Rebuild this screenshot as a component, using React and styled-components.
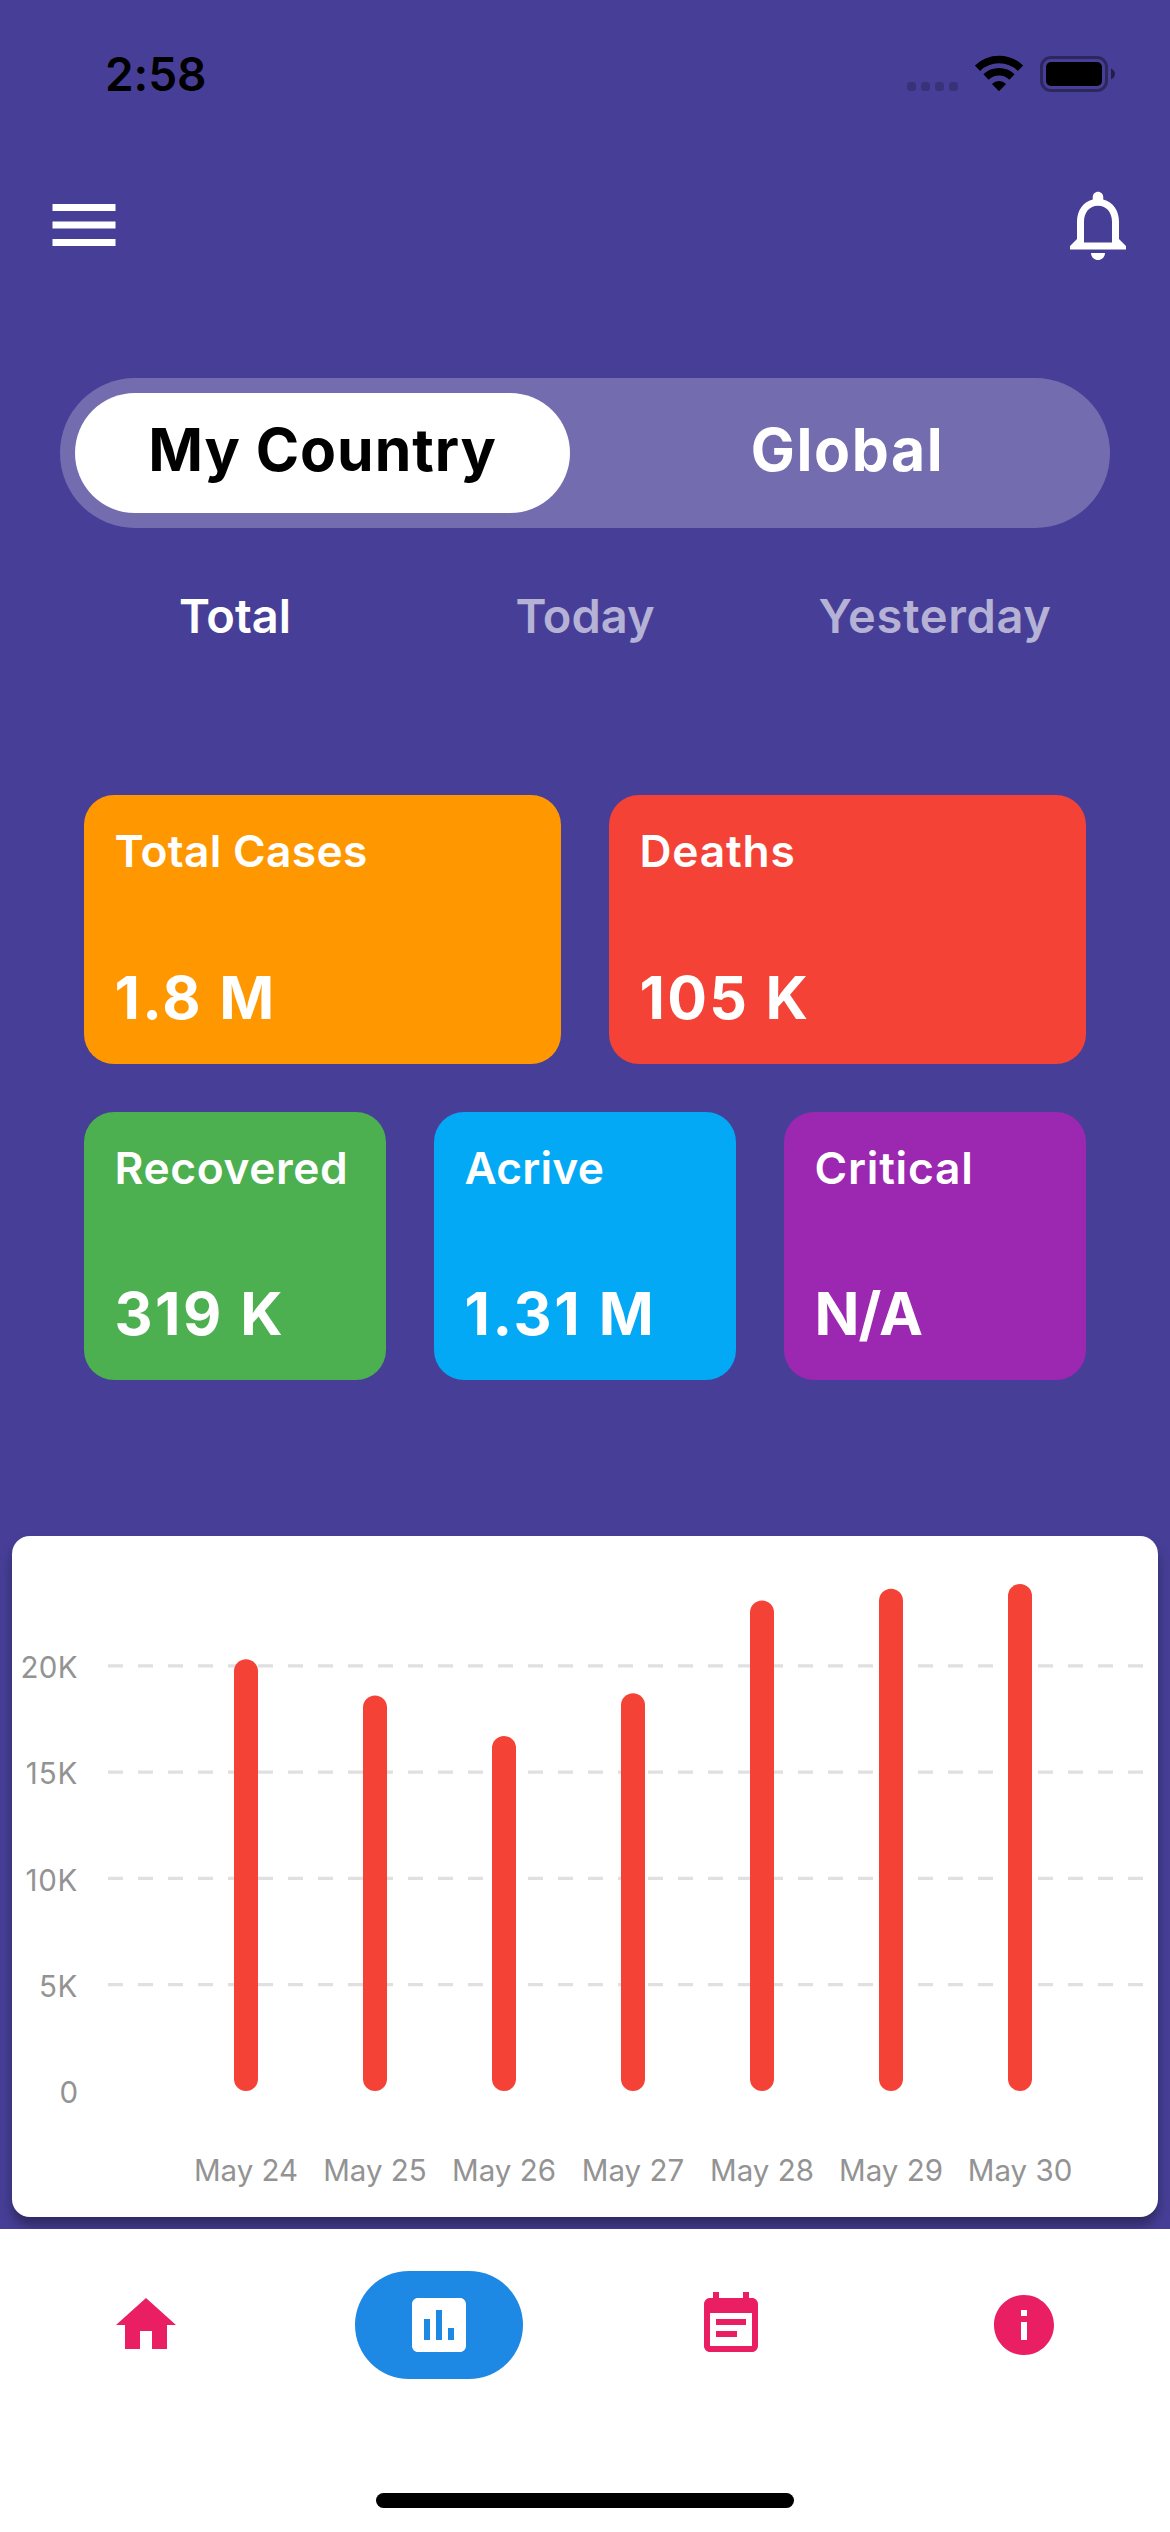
import React from 'react';
import styled, { createGlobalStyle } from 'styled-components';

const GlobalStyle = createGlobalStyle`
  * { box-sizing: border-box; }
  html, body { margin: 0; padding: 0; background: #473f97; }
  body { font-family: Inter, 'Liberation Sans', sans-serif; }
  button { border: 0; padding: 0; margin: 0; background: none; font: inherit; color: inherit; }
  svg { display: block; }
`;

const Screen = styled.div`
  display: flex;
  flex-direction: column;
  width: 1170px;
  height: 2532px;
  background: #473f97;
  overflow: hidden;
`;

const StatusBar = styled.header`
  display: flex;
  justify-content: space-between;
  height: 141px;
  padding: 0 54px 0 105px;
`;

const Clock = styled.time`
  font-size: 46px;
  font-weight: 600;
  line-height: 60px;
  letter-spacing: -0.1px;
  margin-top: 44px;
  color: #000;
`;

const AppBar = styled.nav`
  display: flex;
  align-items: center;
  justify-content: space-between;
  height: 168px;
  padding: 0 30px 0 42px;
  color: #fff;
`;

const IconButton = styled.button`
  display: flex;
`;

const Segmented = styled.div`
  display: grid;
  grid-template-columns: 1fr 1fr;
  gap: 30px;
  height: 150px;
  margin: 69px 60px 0;
  padding: 15px;
  border-radius: 75px;
  background: #736db0;
`;

const Segment = styled.button`
  height: 120px;
  padding-bottom: 8px;
  border-radius: 60px;
  background: ${(p) => (p.$active ? '#fff' : 'transparent')};
  color: ${(p) => (p.$active ? '#000' : '#fff')};
  font-size: 58.8px;
  font-weight: 700;
  letter-spacing: ${(p) => p.$spacing}px;
`;

const Tabs = styled.div`
  display: grid;
  grid-template-columns: repeat(3, 350px);
  margin: 58px 60px 0;
`;

const Tab = styled.button`
  height: 60px;
  line-height: 60px;
  font-size: 47px;
  font-weight: 600;
  letter-spacing: ${(p) => p.$spacing}px;
  color: ${(p) => (p.$active ? '#fff' : '#b5b2d5')};
`;

const Stats = styled.section`
  display: flex;
  flex-direction: column;
  gap: 48px;
  height: 585px;
  margin: 149px 84px 0;
`;

const StatsRow = styled.div`
  display: flex;
  flex: 1;
  gap: 48px;
`;

const Stat = styled.article`
  display: flex;
  flex-direction: column;
  justify-content: space-between;
  flex: 1 1 0;
  min-width: 0;
  padding: 26px 0 31px 30.5px;
  border-radius: 30px;
  background: ${(p) => p.$color};
  color: #fff;
  white-space: nowrap;
`;

const StatLabel = styled.span`
  font-size: 44.3px;
  font-weight: 600;
  line-height: 60px;
  letter-spacing: ${(p) => p.$spacing}px;
`;

const StatValue = styled.span`
  font-size: 59px;
  font-weight: 700;
  line-height: 70px;
  letter-spacing: ${(p) => p.$spacing}px;
`;

const ChartCard = styled.section`
  height: 681px;
  margin: 156px 12px 12px;
  border-radius: 18px;
  background: #fff;
  box-shadow: 0 9px 12px rgba(0, 0, 0, 0.34);
`;

const AxisText = styled.text`
  font-size: 29.5px;
  fill: #939393;
  text-anchor: ${(p) => p.$anchor};
  letter-spacing: ${(p) => p.$spacing || 0}px;
`;

const BottomNav = styled.nav`
  display: flex;
  flex-direction: column;
  align-items: center;
  position: relative;
  height: 303px;
  padding-top: 42px;
  background: #fff;
`;

const NavItems = styled.div`
  display: grid;
  grid-template-columns: repeat(4, 1fr);
  justify-items: center;
  width: 100%;
`;

const NavItem = styled.button`
  display: flex;
  padding: 18px 48px;
  border-radius: 54px;
  background: ${(p) => (p.$active ? '#1e88e5' : 'transparent')};
  color: ${(p) => (p.$active ? '#fff' : '#e91e63')};
`;

const HomeIndicator = styled.div`
  width: 418px;
  height: 15px;
  margin-top: 114px;
  border-radius: 8px;
  background: #000;
`;

const ICONS = {
  menu: 'M3 18h18v-2H3v2zm0-5h18v-2H3v2zm0-7v2h18V6H3z',
  bell: 'M12 22c1.1 0 2-.9 2-2h-4c0 1.1.9 2 2 2zm6-6v-5c0-3.07-1.63-5.64-4.5-6.32V4c0-.83-.67-1.5-1.5-1.5s-1.5.67-1.5 1.5v.68C7.64 5.36 6 7.92 6 11v5l-2 2v1h16v-1l-2-2zm-2 1H8v-6c0-2.48 1.51-4.5 4-4.5s4 2.02 4 4.5v6z',
  home: 'M10 20v-6h4v6h5v-8h3L12 3 2 12h3v8z',
  chart: 'M19 3H5c-1.1 0-2 .9-2 2v14c0 1.1.9 2 2 2h14c1.1 0 2-.9 2-2V5c0-1.1-.9-2-2-2zM9 17H7v-7h2v7zm4 0h-2V7h2v10zm4 0h-2v-4h2v4z',
  events: 'M17 10H7v2h10v-2zm2-7h-1V1h-2v2H8V1H6v2H5c-1.11 0-1.99.9-1.99 2L3 19c0 1.1.89 2 2 2h14c1.1 0 2-.9 2-2V5c0-1.1-.9-2-2-2zm0 16H5V8h14v11zm-5-5H7v2h7v-2z',
  info: 'M12 2C6.48 2 2 6.48 2 12s4.48 10 10 10 10-4.48 10-10S17.52 2 12 2zm1 15h-2v-6h2v6zm0-8h-2V7h2v2z',
};

function Icon({ name, size }) {
  return (
    <svg width={size} height={size} viewBox="0 0 24 24" fill="currentColor" aria-hidden="true">
      <path d={ICONS[name]} />
    </svg>
  );
}

function StatusIcons() {
  return (
    <svg width="209" height="141" viewBox="907 0 209 141" aria-hidden="true">
      {[907, 921, 935, 949].map((x) => (
        <rect key={x} x={x} y="82" width="9" height="9" rx="3" fill="#000" fillOpacity="0.2" />
      ))}
      <path d="M977.5 68.2A31 31 0 0 1 1020.5 68.2" fill="none" stroke="#000" strokeWidth="7.6" />
      <path d="M986 77A18.6 18.6 0 0 1 1012 77" fill="none" stroke="#000" strokeWidth="7.4" />
      <path d="M999 91.2L991.9 84A10 10 0 0 1 1006.1 84Z" fill="#000" />
      <rect x="1041.5" y="57.5" width="65" height="33" rx="9.5" fill="none" stroke="#000" strokeOpacity="0.38" strokeWidth="3" />
      <rect x="1046" y="62" width="56" height="24" rx="5" fill="#000" />
      <path d="M1111 68.5c2.4 1 4 3 4 5.5s-1.600 4.500-4 5.500z" fill="#000" fillOpacity="0.5" />
    </svg>
  );
}

const DAYS = [
  { label: 'May 24', cases: 20.31 },
  { label: 'May 25', cases: 18.6 },
  { label: 'May 26', cases: 16.7 },
  { label: 'May 27', cases: 18.71 },
  { label: 'May 28', cases: 23.07 },
  { label: 'May 29', cases: 23.62 },
  { label: 'May 30', cases: 23.85 },
];
const TICKS = [
  { label: '20K', value: 20, spacing: 0.35 },
  { label: '15K', value: 15, spacing: 0.8 },
  { label: '10K', value: 10, spacing: 0.7 },
  { label: '5K', value: 5, spacing: 0.6 },
  { label: '0', value: 0 },
];
const BASE = 555;
const UNIT = 21.26;

function Chart() {
  return (
    <svg width="1146" height="681" viewBox="0 0 1146 681">
      {TICKS.map(({ label, value, spacing }) => {
        const y = BASE - value * UNIT;
        return (
          <g key={label}>
            <AxisText $anchor="end" $spacing={spacing} x="66" y={y + 12.2}>{label}</AxisText>
            {value > 0 && (
              <line x1="96" x2="1134" y1={y} y2={y} stroke="#e0e0e0" strokeWidth="3.2" strokeDasharray="15 15" />
            )}
          </g>
        );
      })}
      {DAYS.map(({ label, cases }, i) => {
        const x = 222 + i * 129;
        const h = cases * UNIT;
        return (
          <g key={label}>
            <rect x={x} y={BASE - h} width="24" height={h} rx="12" fill="#f44336" />
            <AxisText $anchor="middle" x={x + 12} y="645">{label}</AxisText>
          </g>
        );
      })}
    </svg>
  );
}

const ROWS = [
  [
    { label: 'Total Cases', value: '1.8 M', color: '#ff9800', ls: 0.3, vs: 2.2 },
    { label: 'Deaths', value: '105 K', color: '#f44336', ls: 0.8, vs: 2.3 },
  ],
  [
    { label: 'Recovered', value: '319 K', color: '#4caf50', ls: 0.6, vs: 2.5 },
    { label: 'Acrive', value: '1.31 M', color: '#03a9f4', ls: 0.2, vs: 2.6 },
    { label: 'Critical', value: 'N/A', color: '#9c27b0', ls: 0.8, vs: -1 },
  ],
];

export default function App() {
  return (
    <Screen>
      <GlobalStyle />
      <StatusBar>
        <Clock>2:58</Clock>
        <StatusIcons />
      </StatusBar>
      <AppBar>
        <IconButton aria-label="Menu"><Icon name="menu" size={84} /></IconButton>
        <IconButton aria-label="Notifications"><Icon name="bell" size={84} /></IconButton>
      </AppBar>
      <Segmented>
        <Segment $active $spacing={0.94}>My Country</Segment>
        <Segment $spacing={1.6}>Global</Segment>
      </Segmented>
      <Tabs>
        <Tab $active $spacing={0}>Total</Tab>
        <Tab $spacing={0}>Today</Tab>
        <Tab $spacing={0.65}>Yesterday</Tab>
      </Tabs>
      <Stats>
        {ROWS.map((row) => (
          <StatsRow key={row[0].label}>
            {row.map((s) => (
              <Stat key={s.label} $color={s.color}>
                <StatLabel $spacing={s.ls}>{s.label}</StatLabel>
                <StatValue $spacing={s.vs}>{s.value}</StatValue>
              </Stat>
            ))}
          </StatsRow>
        ))}
      </Stats>
      <ChartCard>
        <Chart />
      </ChartCard>
      <BottomNav>
        <NavItems>
          <NavItem aria-label="Home"><Icon name="home" size={72} /></NavItem>
          <NavItem $active aria-label="Statistics"><Icon name="chart" size={72} /></NavItem>
          <NavItem aria-label="Events"><Icon name="events" size={72} /></NavItem>
          <NavItem aria-label="Info"><Icon name="info" size={72} /></NavItem>
        </NavItems>
        <HomeIndicator />
      </BottomNav>
    </Screen>
  );
}
